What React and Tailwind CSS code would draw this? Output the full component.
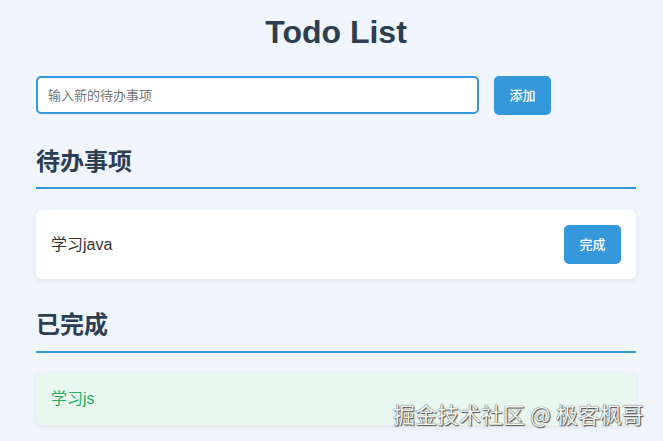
import React from "react";

const FONT = "font-['Liberation_Sans','Helvetica','Noto_Sans_CJK_SC',sans-serif]";

export default function App() {
  return (
    <div className={`relative min-h-screen bg-[#f0f5fe] ${FONT}`}>
      <div className="ml-[36px] w-[600px] pt-[14px]">
        <h1 className="text-center text-[32px] leading-[37px] font-bold text-[#2c3e50]">Todo List</h1>
        <div className="mt-[25px] flex gap-[15px]">
          <input
            className="h-[38px] w-[443px] rounded-[5px] border-2 border-[#3498db] bg-white px-[10px] text-[13px] text-[#333] outline-none placeholder:text-[#777]"
            placeholder="输入新的待办事项"
          />
          <button className="h-[39px] w-[57px] rounded-[5px] bg-[#3498db] text-[13px] font-medium text-white">添加</button>
        </div>
        <h2 className="mt-[32px] border-b-2 border-[#3498db] pb-[10px] text-[24px] leading-[30px] font-semibold text-[#2c3e50]">待办事项</h2>
        <div className="mt-[21px] flex items-center justify-between rounded-[6px] bg-white p-[15px] shadow-[0_2px_6px_rgba(0,0,0,0.08)]">
          <span className="text-[16px] text-[#333]">学习java</span>
          <button className="h-[39px] w-[57px] rounded-[5px] bg-[#3498db] text-[13px] font-medium text-white">完成</button>
        </div>
        <h2 className="mt-[31px] border-b-2 border-[#3498db] pb-[11px] text-[24px] leading-[30px] font-semibold text-[#2c3e50]">已完成</h2>
        <div className="mt-[19px] flex items-center rounded-[6px] bg-[#e8f8f0] p-[15px] shadow-[0_2px_6px_rgba(0,0,0,0.08)]">
          <span className="text-[16px] leading-[23px] text-[#27ae60]">学习js</span>
        </div>
      </div>
      <div className="absolute left-[393px] top-[399px] whitespace-nowrap text-[22px] leading-[28px] text-[#f4f4f4] [text-shadow:0_0_1px_#222,1px_1px_1px_#555] font-['Noto_Sans_CJK_SC',sans-serif]">
        掘金技术社区 @ 极客枫哥
      </div>
    </div>
  );
}
